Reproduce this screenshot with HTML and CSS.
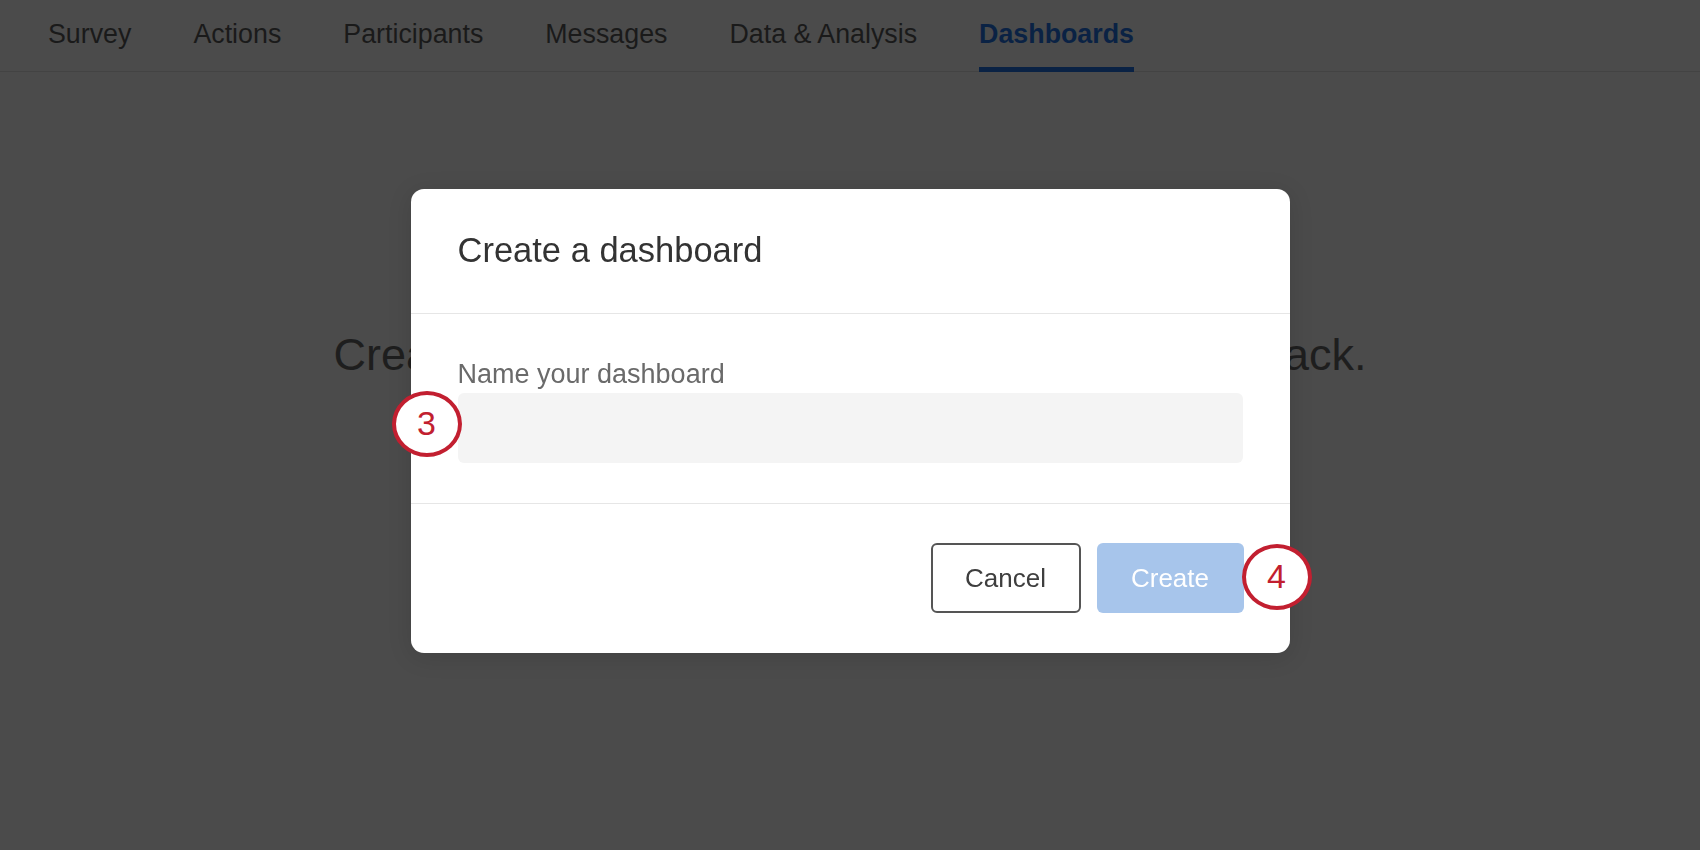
FILE: index.html
```html
<!DOCTYPE html>
<html lang="en">
<head>
	<meta charset="UTF-8">
	<title>Dashboards</title>
	<link rel="stylesheet" href="styles.css">
</head>
<body>
<nav class="tabs">
	<a href="javascript:;" class="tab">Survey</a>
	<a href="javascript:;" class="tab">Actions</a>
	<a href="javascript:;" class="tab">Participants</a>
	<a href="javascript:;" class="tab">Messages</a>
	<a href="javascript:;" class="tab">Data &amp; Analysis</a>
	<a href="javascript:;" class="tab active">Dashboards</a>
</nav>
<section class="empty">
	<p class="empty-text">Create a dashboard to share insights and feedback.</p>
</section>

<!-- 弹窗 -->
<div class="overlay">
	<div class="modal">
		<div class="modal-head">
			<h2 class="modal-title">Create a dashboard</h2>
		</div>
		<div class="modal-body">
			<label class="field-label" for="dashName">Name your dashboard</label>
			<input class="field-input" id="dashName" type="text">
		</div>
		<div class="modal-foot">
			<a href="javascript:;" class="btn btn-cancel">Cancel</a>
			<a href="javascript:;" class="btn btn-create">Create</a>
		</div>
		<span class="step step-3">3</span>
		<span class="step step-4">4</span>
	</div>
</div>
</body>
</html>
```

FILE: styles.css
```css
body, h1, h2, h3, p, ul, ol, li
{
	margin: 0;
	padding: 0;
}

html, body {
	width: 100%;
	height: 100%;
	font: 26px/30px "Liberation Sans", Arial, sans-serif;
}
a { text-decoration: none; }

body{
	background: #4b4b4b;
	overflow: hidden;
}

/* 顶部导航 */
.tabs{
	display: flex;
	gap: 62px;
	height: 72px;
	padding-left: 48px;
	box-sizing: border-box;
	border-bottom: 1px solid #434343;
	font-size: 26.8px;
}
.tab{
	padding-top: 19px;
	color: #1a1a1a;
	white-space: nowrap;
}
.tab.active{
	color: #0a2244;
	font-weight: bold;
	height: 48px;
	border-bottom: 5px solid #0a2244;
	margin-bottom: -1px;
}

/* 空状态 */
.empty{
	padding-top: 260px;
	text-align: center;
}
.empty-text{
	font-size: 45px;
	line-height: 45px;
	color: #1e1e1e;
	white-space: nowrap;
}

/* 遮罩 + 弹窗 */
.overlay{
	position: fixed;
	left: 0;
	top: 0;
	right: 0;
	bottom: 0;
	display: flex;
	justify-content: center;
	align-items: flex-start;
	padding-top: 189px;
}
.modal{
	position: relative;
	width: 879px;
	background: #fff;
	border-radius: 13px;
	box-shadow: 0 4px 24px rgba(0,0,0,.12);
}
.modal-head{
	padding: 41px 47px 43px;
	border-bottom: 1px solid #e6e6e6;
}
.modal-title{
	font-size: 34.5px;
	line-height: 40px;
	font-weight: normal;
	color: #333;
}
.modal-body{
	padding: 45px 47px 40px;
	border-bottom: 1px solid #e6e6e6;
}
.field-label{
	display: block;
	font-size: 27px;
	color: #6a6a6a;
	margin-bottom: 4px;
}
.field-input{
	display: block;
	width: 100%;
	height: 70px;
	box-sizing: border-box;
	border: 0;
	border-radius: 6px;
	background: #f4f4f4;
	outline: none;
}
.modal-foot{
	display: flex;
	justify-content: flex-end;
	gap: 16px;
	padding: 39px 46px 40px;
}
.btn{
	height: 70px;
	line-height: 70px;
	text-align: center;
	border-radius: 6px;
	box-sizing: border-box;
}
.btn-cancel{
	width: 150px;
	line-height: 66px;
	border: 2px solid #555;
	color: #3e3e3e;
}
.btn-create{
	width: 147px;
	background: #a7c5eb;
	color: #fff;
}

/* 步骤标记 */
.step{
	position: absolute;
	width: 70px;
	height: 66px;
	line-height: 57px;
	box-sizing: border-box;
	border: 4.5px solid #c21f30;
	border-radius: 50%;
	background: #fff;
	color: #c21f30;
	font-size: 34px;
	text-align: center;
}
.step-3{
	left: -19px;
	top: 202px;
}
.step-4{
	left: 831px;
	top: 355px;
}
```
